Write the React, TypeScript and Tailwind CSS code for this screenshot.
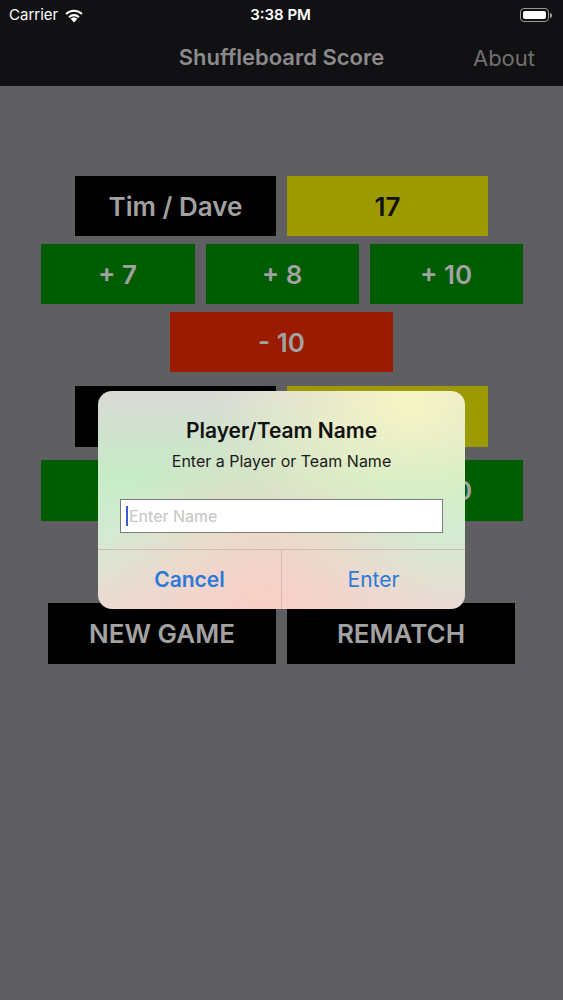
import React from "react";

const font = { fontFamily: "Inter, 'Noto Sans', sans-serif" };

function Wifi() {
  return (
    <svg width="20" height="15" viewBox="0 0 20 15" className="ml-[6px]">
      <path d="M10 14.5 L6.6 10.8 A5 5 0 0 1 13.4 10.8 Z" fill="#fff" />
      <path d="M4.4 8.4 A8 8 0 0 1 15.6 8.4 L14.2 9.9 A6 6 0 0 0 5.8 9.9 Z" fill="#fff" />
      <path d="M1.4 5.2 A12.2 12.2 0 0 1 18.6 5.2 L17.2 6.7 A10.2 10.2 0 0 0 2.8 6.7 Z" fill="#fff" />
    </svg>
  );
}

function Battery() {
  return (
    <div className="flex items-center">
      <div className="w-[29px] h-[14px] rounded-[4px] border border-[#9a9a9a] p-[2px]">
        <div className="w-full h-full rounded-[2px] bg-white" />
      </div>
      <div className="w-[2px] h-[5px] rounded-r-sm bg-[#9a9a9a] ml-[1px]" />
    </div>
  );
}

function Tile({ className, children }: { className: string; children?: React.ReactNode }) {
  return (
    <div className={`flex items-center justify-center text-[26px] font-semibold ${className}`}>
      {children}
    </div>
  );
}

export default function App() {
  return (
    <div className="relative w-[563px] h-[1000px] overflow-hidden bg-[#5f5e61]" style={font}>
      {/* status + nav */}
      <div className="bg-[#111013]">
        <div className="h-[30px] flex items-center px-[9px] text-white text-[15px]">
          <div className="flex-1 flex items-center">
            <span>Carrier</span>
            <Wifi />
          </div>
          <span className="font-semibold">3:38 PM</span>
          <div className="flex-1 flex justify-end pr-[2px]">
            <Battery />
          </div>
        </div>
        <div className="h-[56px] relative flex items-center justify-center">
          <span className="text-[22px] font-semibold text-[#8b8b8c] -mt-[2px]">Shuffleboard Score</span>
          <span className="absolute right-[28px] top-[12px] text-[22px] text-[#6f6f70]">About</span>
        </div>
      </div>

      {/* board */}
      <div className="flex flex-col items-center pt-[90px] text-[#a2a2a2]">
        <div className="flex gap-[11px]">
          <Tile className="w-[201px] h-[60px] bg-black">Tim / Dave</Tile>
          <Tile className="w-[201px] h-[60px] bg-[#9c9a00] text-[#111]">17</Tile>
        </div>
        <div className="flex gap-[11px] mt-[8px]">
          <Tile className="w-[154px] h-[60px] bg-[#005c00]">+ 7</Tile>
          <Tile className="w-[153px] h-[60px] bg-[#005c00]">+ 8</Tile>
          <Tile className="w-[153px] h-[60px] bg-[#005c00]">+ 10</Tile>
        </div>
        <Tile className="w-[223px] h-[60px] mt-[8px] bg-[#9b1b00]">- 10</Tile>

        {/* second team, mostly under the alert */}
        <div className="flex gap-[11px] mt-[14px]">
          <Tile className="w-[201px] h-[61px] bg-black" />
          <Tile className="w-[201px] h-[61px] bg-[#9c9a00]" />
        </div>
        <div className="flex gap-[11px] mt-[13px]">
          <Tile className="w-[154px] h-[61px] bg-[#005c00]" />
          <Tile className="w-[153px] h-[61px] bg-[#005c00]" />
          <Tile className="w-[153px] h-[61px] bg-[#005c00]">+ 10</Tile>
        </div>
        <Tile className="w-[223px] h-[60px] mt-[7px] bg-[#9b1b00]" />

        <div className="flex gap-[11px] mt-[15px]">
          <Tile className="w-[228px] h-[61px] bg-black">NEW GAME</Tile>
          <Tile className="w-[228px] h-[61px] bg-black">REMATCH</Tile>
        </div>
      </div>

      {/* alert */}
      <div className="absolute left-[98px] top-[391px] w-[367px] h-[218px] rounded-[14px] overflow-hidden bg-[radial-gradient(ellipse_at_85%_5%,#f7f5c4_0%,rgba(247,245,196,0)_45%),radial-gradient(ellipse_at_45%_100%,#f9cfc6_0%,rgba(249,207,198,0)_60%),linear-gradient(180deg,#d9d9d6_0%,#c6ecc6_40%,#d3ebd3_65%,#ecd9d3_100%)] flex flex-col">
        <div className="flex flex-col items-center pt-[27px]">
          <div className="text-[21px] font-semibold text-[#111] leading-[26px]">Player/Team Name</div>
          <div className="text-[16px] text-[#1a1a1a] mt-[7px] leading-[20px]">Enter a Player or Team Name</div>
        </div>
        <div className="mx-[22px] mt-[28px] h-[34px] bg-white border border-[#7a7a7a] flex items-center px-[5px]">
          <div className="w-[2px] h-[20px] bg-[#3b5bd6] mr-[1px]" />
          <span className="text-[16px] text-[#c4c4c4]">Enter Name</span>
        </div>
        <div className="mt-[16px] border-t border-[#cfb9b3] flex flex-1">
          <div className="flex-1 flex items-center justify-center text-[21px] font-semibold text-[#2b79d8] border-r border-[#d2b5ae]">
            Cancel
          </div>
          <div className="flex-1 flex items-center justify-center text-[21px] text-[#2b79d8]">Enter</div>
        </div>
      </div>
    </div>
  );
}
